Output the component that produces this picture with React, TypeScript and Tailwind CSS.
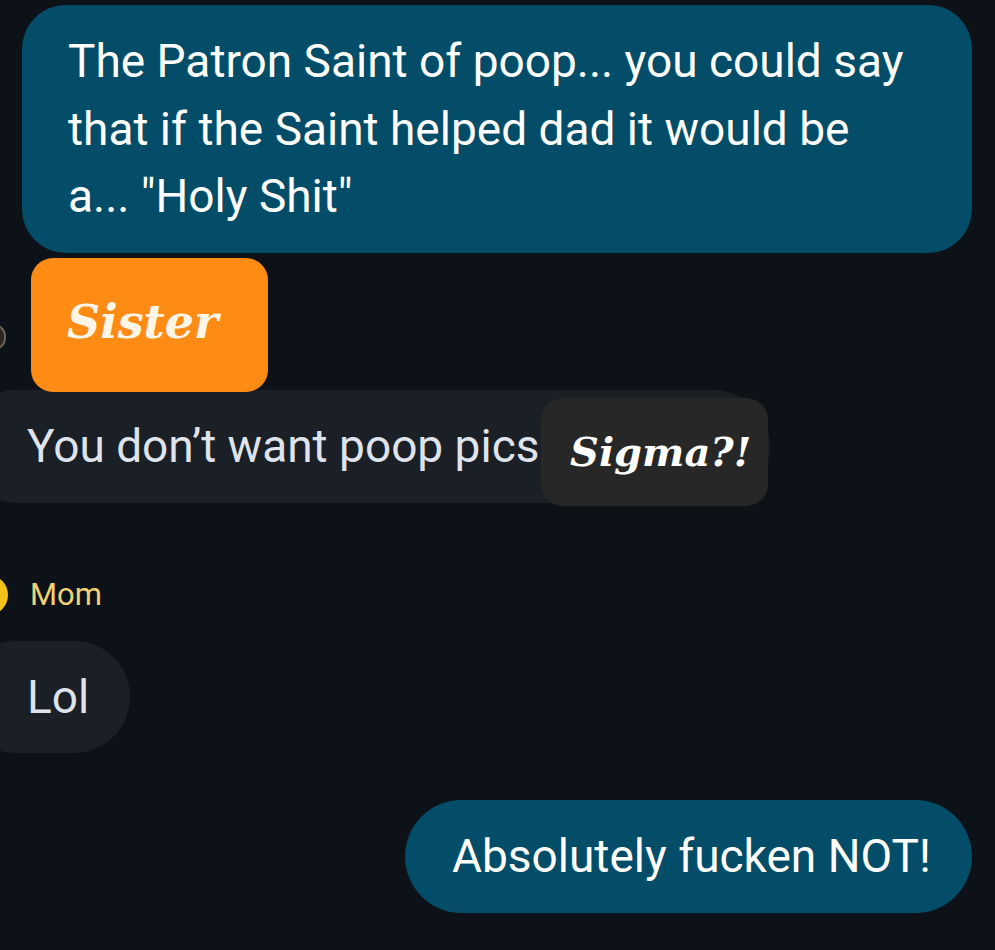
import React from 'react';

const sans = { fontFamily: 'Roboto, "Noto Sans", sans-serif' };
const serif = { fontFamily: '"DejaVu Serif", serif' };

const App: React.FC = () => {
  return (
    <div className="relative w-[995px] h-[950px] overflow-hidden bg-[#0d1218] text-[#e6eaf2]" style={sans}>
      {/* outgoing message */}
      <div className="ml-[22px] mt-[5px] w-[950px] h-[248px] rounded-[44px] bg-[#034d68] pl-[46px] pt-[23px] text-[46px] leading-[67.5px] text-white">
        <p>The Patron Saint of poop... you could say</p>
        <p>that if the Saint helped dad it would be</p>
        <p>a... "Holy Shit"</p>
      </div>

      {/* sister label (covers the name) */}
      <div className="relative z-10 mt-[5px] flex items-center">
        <div className="-ml-[18px] mt-[24px] h-[26px] w-[24px] rounded-full border-2 border-[#6b6256] bg-[#2a251f]" />
        <div className="ml-[25px] flex h-[134px] w-[237px] items-center rounded-[22px] bg-[#fd8b14] pl-[36px] pb-[6px]">
          <span className="text-[46px] font-bold italic text-[#fff6e8]" style={serif}>Sister</span>
        </div>
      </div>

      {/* incoming message with sigma sticker */}
      <div className="relative -mt-[2px] h-[113px] w-[810px] -ml-[40px] rounded-full bg-[#1b1f26] pl-[67px] flex items-center">
        <span className="text-[46px] text-[#dfe3ec]">You don’t want poop pics</span>
        <div className="absolute left-[581px] top-[8px] flex h-[108px] w-[227px] items-center rounded-[22px] bg-[#272727] pl-[29px]">
          <span className="text-[40px] font-bold italic text-white" style={serif}>Sigma?!</span>
        </div>
      </div>

      {/* mom */}
      <div className="mt-[72px] flex items-center h-[40px]">
        <div className="-ml-[32px] h-[40px] w-[40px] rounded-full bg-[#f2c21b]" />
        <span className="ml-[22px] text-[31px] text-[#f0d272]">Mom</span>
      </div>
      <div className="mt-[26px] -ml-[40px] flex h-[112px] w-[170px] items-center rounded-full bg-[#1b1f26] pl-[67px]">
        <span className="text-[46px] text-[#dfe3ec]">Lol</span>
      </div>

      {/* outgoing */}
      <div className="mt-[47px] ml-[405px] flex h-[113px] w-[567px] items-center rounded-full bg-[#034d68] pl-[47px]">
        <span className="text-[46px] text-white">Absolutely fucken NOT!</span>
      </div>
    </div>
  );
};

export default App;
